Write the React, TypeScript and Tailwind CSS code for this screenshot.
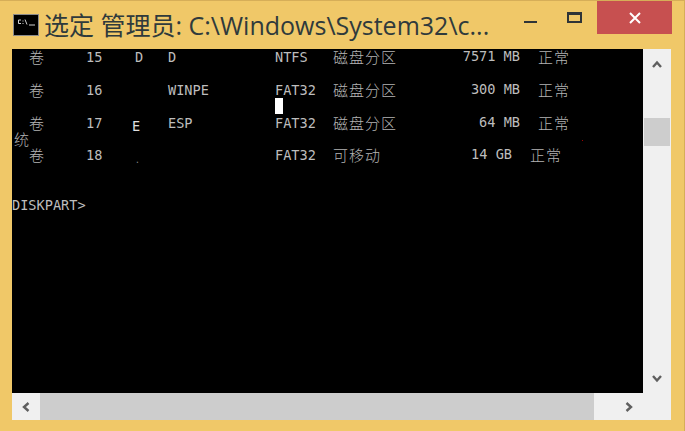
import { ReactNode } from 'react';

const CJK = "font-['Noto_Sans_CJK_SC',sans-serif] font-light text-[15px] tracking-[1px] text-[#b4b4b4]";

type Vol = {
  num: string;
  letter?: ReactNode;
  label: string;
  fs: string;
  type: string;
  size: string;
  sizeWidth: string;
  status: string;
};

const Chevron = ({ d, className }: { d: string; className: string }) => (
  <svg viewBox="0 0 12 12" className={className} fill="none" stroke="#5f5f5f" strokeWidth="2.4">
    <path d={d} />
  </svg>
);

// one console row, columns are fixed because the console draws on a char grid
const VolumeRow = ({ v }: { v: Vol }) => (
  <div className="flex h-[16.4px] items-center whitespace-pre pl-[17px]">
    <span className={`w-[57px] ${CJK}`}>卷</span>
    <span className="w-[49px]">{v.num}</span>
    <span className="w-[33px]">{v.letter}</span>
    <span className="w-[107px]">{v.label}</span>
    <span className="w-[58px]">{v.fs}</span>
    <span className={`${v.sizeWidth} flex`}>
      <span className={`${CJK} w-[70px] shrink-0`}>{v.type}</span>
      <span className="flex-1 text-right">{v.size}</span>
    </span>
    <span className={`ml-[18px] ${CJK}`}>{v.status}</span>
  </div>
);

const Blank = () => <div className="h-[16.4px]" />;

export default function App() {
  const part = { sizeWidth: 'w-[187px]', type: '磁盘分区', status: '正常' };
  return (
    <div className="flex h-[431px] w-[685px] flex-col overflow-hidden border-t border-r border-[#d6ae58] bg-[#f0c868]">
      {/* title bar */}
      <div className="flex h-[48px] shrink-0 items-start">
        <div className="ml-[14px] mt-[14px] flex h-[20px] w-[24px] shrink-0 items-center bg-black shadow-[0_0_0_1px_#8a8a8a]">
          <svg viewBox="0 0 24 20" className="h-[20px] w-[24px]" fill="none" stroke="#d0d0d0" strokeWidth="1">
            <path d="M7 5H4.5V8.5H7M9 5.5V6.5M9 8V9M11 4.5L13 9.5M15 10H21" />
          </svg>
        </div>
        <div className="ml-[6px] mt-[9px] w-[450px] whitespace-pre font-['Open_Sans','Noto_Sans_CJK_SC',sans-serif] text-[25px] leading-[30px] text-[#2f3a3c]">
          选定 管理员: C:\Windows\System32\c...
        </div>
        <div className="ml-[30px] mt-[20px] h-[2px] w-[13px] bg-[#2f3437]" />
        <div className="ml-[30px] mt-[11px] h-[11px] w-[15px] border-2 border-t-[3px] border-[#2f3437]" />
        <div className="ml-[15px] flex h-[33px] w-[75px] items-center justify-center bg-[#c75050]">
          <svg viewBox="0 0 12 12" className="h-[12px] w-[12px]" stroke="white" strokeWidth="2">
            <path d="M1 1L11 11M11 1L1 11" />
          </svg>
        </div>
      </div>

      {/* console + scrollbars */}
      <div className="ml-[12px] flex w-[659px] flex-col">
        <div className="flex h-[344px]">
          <div className="relative w-[631px] bg-black font-['DejaVu_Sans_Mono',monospace] text-[13.6px] font-medium text-[#bdbdbd]">
            <VolumeRow v={{ ...part, num: '15', letter: 'D', label: 'D', fs: 'NTFS', size: '7571 MB' }} />
            <Blank />
            <VolumeRow v={{ ...part, num: '16', label: 'WINPE', fs: 'FAT32', size: '300 MB' }} />
            <Blank />
            <VolumeRow
              v={{
                ...part,
                num: '17',
                letter: <span className="-ml-[3px] inline-block translate-y-[3px] text-[#e0e0e0]">E</span>,
                label: 'ESP',
                fs: 'FAT32',
                size: '64 MB',
              }}
            />
            <div className={`flex h-[16.4px] items-center pl-[2px] ${CJK}`}>统</div>
            <VolumeRow
              v={{
                num: '18',
                letter: <span className="inline-block translate-y-[3px] text-[8px] text-[#8a8a8a]">.</span>,
                label: '',
                fs: 'FAT32',
                type: '可移动',
                size: '14 GB',
                sizeWidth: 'w-[179px]',
                status: '正常',
              }}
            />
            <Blank />
            <Blank />
            <div className="flex h-[16.4px] items-center">DISKPART&gt;</div>
            {/* selection block */}
            <div className="absolute left-[263px] top-[49px] h-[16px] w-[8px] bg-white" />
            <div className="absolute left-[570px] top-[91px] h-[1px] w-[1px] bg-[#a00000]" />
          </div>
          <div className="flex w-[28px] flex-col items-center bg-[#f0f0f0]">
            <Chevron d="M2 9L6 4.5L10 9" className="mt-[9px] h-[12px] w-[12px]" />
            <div className="mt-[48px] h-[28px] w-[26px] bg-[#cdcdcd]" />
            <Chevron d="M2 3L6 7.5L10 3" className="mt-[227px] h-[12px] w-[12px]" />
          </div>
        </div>
        <div className="flex h-[27px] bg-[#f0f0f0]">
          <div className="flex w-[28px] items-center justify-center">
            <Chevron d="M8.5 2L4 6L8.5 10" className="h-[12px] w-[12px]" />
          </div>
          <div className="w-[554px] bg-[#cdcdcd]" />
          <div className="flex flex-1 items-center pl-[29px]">
            <Chevron d="M3.5 2L8 6L3.5 10" className="h-[12px] w-[12px]" />
          </div>
        </div>
      </div>
    </div>
  );
}
